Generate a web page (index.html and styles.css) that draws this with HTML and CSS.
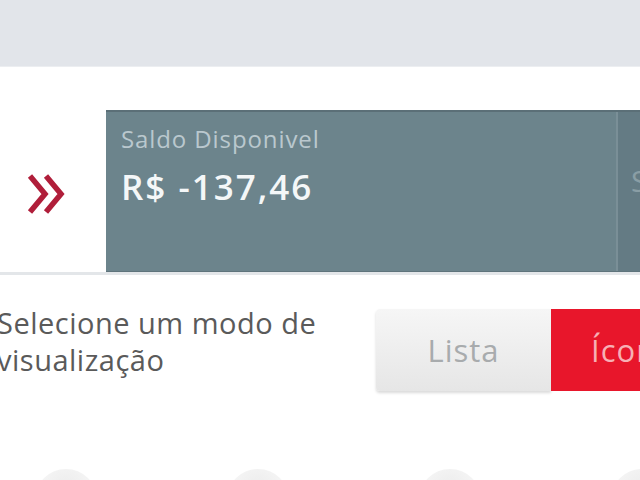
FILE: index.html
```html
<!DOCTYPE html>
<html lang="pt-BR">
<head>
<meta charset="utf-8">
<link rel="stylesheet" href="styles.css">
</head>
<body>
<div class="page">
  <div class="topbar"></div>
  <div class="balance-row">
    <div class="arrow-cell">
      <svg class="chev" width="40" height="42" viewBox="0 0 40 42">
        <path d="M3 3 L18 21 L3 39" fill="none" stroke="#b01e3a" stroke-width="5.5" stroke-linejoin="miter"/>
        <path d="M19 3 L34 21 L19 39" fill="none" stroke="#b01e3a" stroke-width="5.5" stroke-linejoin="miter"/>
      </svg>
    </div>
    <div class="card">
      <div class="card-main">
        <div class="card-label">Saldo Disponivel</div>
        <div class="card-value">R$ -137,46</div>
      </div>
      <div class="card-next"><span>S</span></div>
    </div>
  </div>
  <div class="rule"></div>
  <div class="mode-row">
    <div class="mode-text">Selecione um modo de<br>visualização</div>
    <div class="toggle">
      <div class="tg tg-off">Lista</div>
      <div class="tg tg-on">Ícones</div>
    </div>
  </div>
  <div class="icons-row">
    <div class="blob"></div>
    <div class="blob"></div>
    <div class="blob"></div>
    <div class="blob"></div>
  </div>
</div>
</body>
</html>
```

FILE: styles.css
```css
html, body {
  margin: 0;
  padding: 0;
  background: #ffffff;
}
body {
  width: 640px;
  height: 480px;
  overflow: hidden;
  font-family: "Open Sans", "Noto Sans", sans-serif;
}
.page {
  width: 640px;
  height: 480px;
  overflow: hidden;
}
.topbar {
  height: 66px;
  background: #e2e5ea;
  border-bottom: 1px solid #eceef1;
}
.balance-row {
  display: flex;
  margin-top: 43px;
  height: 162px;
}
.arrow-cell {
  width: 106px;
  flex: none;
  display: flex;
  align-items: center;
  padding-left: 27px;
  box-sizing: border-box;
  padding-top: 6px;
}
.card {
  flex: 1;
  display: flex;
  background: #6c848c;
  border-top: 2px solid #5b6f77;
  border-bottom: 1px solid #5f747c;
  min-width: 0;
}
.card-main {
  width: 512px;
  flex: none;
  padding: 11px 0 0 15px;
  box-sizing: border-box;
  border-right: 2px solid #7a8f97;
}
.card-label {
  color: #bac8ce;
  font-size: 24px;
  line-height: 32px;
  letter-spacing: 0.9px;
}
.card-value {
  color: #f4f7f8;
  font-size: 35px;
  font-weight: 600;
  line-height: 46px;
  margin-top: 9px;
  letter-spacing: 2px;
}
.card-next {
  flex: 1;
  background: #647b84;
  color: #8a9ea5;
  font-size: 30px;
  padding-top: 48px;
  padding-left: 13px;
  overflow: hidden;
}
.rule {
  height: 3px;
  background: #e3e6e9;
}
.mode-row {
  display: flex;
  margin-top: 34px;
  height: 82px;
}
.mode-text {
  width: 376px;
  flex: none;
  margin-left: -3px;
  color: #5a5a5a;
  font-size: 29px;
  line-height: 37px;
  margin-top: -5px;
  letter-spacing: 0.5px;
}
.toggle {
  display: flex;
  flex: none;
  margin-left: 3px;
  height: 82px;
}
.tg {
  display: flex;
  align-items: center;
  justify-content: center;
  font-size: 31px;
  letter-spacing: 1px;
}
.tg-off {
  width: 175px;
  background: linear-gradient(#f6f6f6, #e6e6e6);
  color: #a8abad;
  border-radius: 4px 0 0 4px;
  box-shadow: 0 2px 3px rgba(0,0,0,0.15);
}
.tg-on {
  width: 150px;
  background: #e8162b;
  color: #f7b0b5;
  justify-content: flex-start;
  padding-left: 40px;
  box-sizing: border-box;
}
.icons-row {
  display: flex;
  gap: 130px;
  margin-top: 78px;
  padding-left: 35px;
}
.blob {
  width: 62px;
  height: 62px;
  flex: none;
  border-radius: 50%;
  background: radial-gradient(circle at 50% 30%, #ececec, #f6f6f6 55%, #ffffff 75%);
}
```
